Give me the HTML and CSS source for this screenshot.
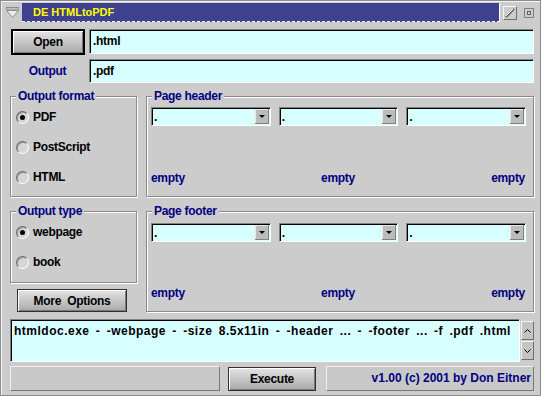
FILE: index.html
```html
<!DOCTYPE html>
<html>

<head>
  <meta charset="utf-8">
  <title>DE HTMLtoPDF</title>
  <link rel="stylesheet" href="styles.css">
</head>

<body>
  <div class="window">
    <div class="titlebar">
      <div class="sysmenu">
        <svg width="13" height="11" viewBox="0 0 13 11">
          <rect x="0.5" y="0.5" width="12" height="1.5" fill="#f4f4f4" stroke="#8a8a8a" stroke-width="1" />
          <polygon points="0.5,3.5 12.5,3.5 6.5,10.5" fill="#ececec" stroke="#8a8a8a" stroke-width="1" />
        </svg>
      </div>
      <div class="title">DE HTMLtoPDF</div>
      <div class="winbtns">
        <span class="winbtn hide">
          <svg width="10" height="10" viewBox="0 0 10 10">
            <line x1="1" y1="9" x2="9" y2="1" stroke="#606060" stroke-width="2" />
            <line x1="1" y1="8" x2="8" y2="1" stroke="#ffffff" stroke-width="1" />
          </svg>
        </span>
        <span class="winbtn restore">
          <svg width="10" height="10" viewBox="0 0 10 10">
            <rect x="0.5" y="0.5" width="9" height="9" fill="none" stroke="#808080" />
            <rect x="3.5" y="3.5" width="3" height="3" fill="none" stroke="#606060" />
          </svg>
        </span>
      </div>
    </div>

    <div class="client">
      <div class="row row-open">
        <button class="btn btn-default open">Open</button>
        <div class="entry">.html</div>
      </div>
      <div class="row row-output">
        <span class="field-label">Output</span>
        <div class="entry">.pdf</div>
      </div>

      <div class="panes">
        <fieldset class="group format">
          <legend>Output format</legend>
          <div class="radios">
            <div class="radio-row"><span class="radio checked"></span>PDF</div>
            <div class="radio-row"><span class="radio"></span>PostScript</div>
            <div class="radio-row"><span class="radio"></span>HTML</div>
          </div>
        </fieldset>

        <fieldset class="group slots header">
          <legend>Page header</legend>
          <div class="combos">
            <div class="combo"><span class="combo-text">.</span><span class="combo-btn"></span></div>
            <div class="combo"><span class="combo-text">.</span><span class="combo-btn"></span></div>
            <div class="combo"><span class="combo-text">.</span><span class="combo-btn"></span></div>
          </div>
          <div class="slot-values">
            <span>empty</span>
            <span>empty</span>
            <span>empty</span>
          </div>
        </fieldset>

        <div class="left-stack">
          <fieldset class="group type">
            <legend>Output type</legend>
            <div class="radios">
              <div class="radio-row"><span class="radio checked"></span>webpage</div>
              <div class="radio-row"><span class="radio"></span>book</div>
            </div>
          </fieldset>
          <button class="btn more">More&nbsp; Options</button>
        </div>

        <fieldset class="group slots footer">
          <legend>Page footer</legend>
          <div class="combos">
            <div class="combo"><span class="combo-text">.</span><span class="combo-btn"></span></div>
            <div class="combo"><span class="combo-text">.</span><span class="combo-btn"></span></div>
            <div class="combo"><span class="combo-text">.</span><span class="combo-btn"></span></div>
          </div>
          <div class="slot-values">
            <span>empty</span>
            <span>empty</span>
            <span>empty</span>
          </div>
        </fieldset>
      </div>

      <div class="command">
        <div class="command-text">htmldoc.exe - -webpage - -size 8.5x11in - -header ... - -footer ... -f .pdf .html</div>
        <div class="scroller">
          <span class="scroll-btn up">
            <svg width="7" height="4" viewBox="0 0 7 4"><polyline points="0.5,3.5 3.5,0.5 6.5,3.5" fill="none" stroke="#000" stroke-width="1" /></svg>
          </span>
          <span class="scroll-btn down">
            <svg width="7" height="4" viewBox="0 0 7 4"><polyline points="0.5,0.5 3.5,3.5 6.5,0.5" fill="none" stroke="#000" stroke-width="1" /></svg>
          </span>
        </div>
      </div>

      <div class="statusbar">
        <div class="panel"></div>
        <button class="btn execute">Execute</button>
        <div class="panel version">v1.00 (c) 2001 by Don Eitner</div>
      </div>
    </div>
  </div>
</body>

</html>
```

FILE: styles.css
```css
body {
  margin: 0;
  background: #cccccc;
  font-family: "Liberation Sans", Arial, sans-serif;
  font-weight: bold;
  font-size: 12px;
  letter-spacing: -0.3px;
  color: #000;
}

.window {
  box-sizing: border-box;
  width: 541px;
  height: 396px;
  border: 1px solid #8c8c8c;
  box-shadow: inset 1px 1px 0 #f4f4f4;
  padding: 2px 3px 3px 2px;
  display: flex;
  flex-direction: column;
}

/* title bar */
.titlebar {
  display: flex;
  height: 19px;
}

.sysmenu {
  width: 19px;
  display: flex;
  align-items: center;
  justify-content: center;
}

.title {
  flex: 1;
  background: #404090;
  color: #ffff00;
  font-size: 11px;
  letter-spacing: 0;
  line-height: 18px;
  padding-left: 11px;
  border-bottom: 1px dashed #ffffff;
  border-right: 1px solid #ffffff;
}

.winbtns {
  width: 37px;
  display: flex;
  align-items: center;
  justify-content: space-between;
  padding: 0 3px 0 3px;
  box-sizing: border-box;
}

.winbtn {
  display: flex;
  align-items: center;
  justify-content: center;
}

.winbtn.hide {
  width: 12px;
  height: 12px;
  border: 1px solid;
  border-color: #f4f4f4 #707070 #707070 #f4f4f4;
}

/* client area */
.client {
  flex: 1;
  display: flex;
  flex-direction: column;
  padding: 7px 3px 0 7px;
}

.row {
  display: flex;
  align-items: center;
}

.row-open {
  height: 26px;
}

.row-output {
  height: 24px;
  margin-top: 4px;
}

.btn {
  font: inherit;
  letter-spacing: inherit;
  color: #000;
  padding: 0;
  border: 1px solid #303030;
  background: linear-gradient(#e4e4e4, #a9a9a9);
  box-shadow: inset 1px 1px 0 #ffffff, inset -1px -1px 0 #7a7a7a;
}

.btn-default {
  border: 2px solid #000;
}

.open {
  width: 74px;
  height: 26px;
  margin-left: 1px;
}

.field-label {
  width: 75px;
  text-align: center;
  color: #000080;
}

.entry {
  flex: 1;
  height: 24px;
  box-sizing: border-box;
  margin-left: 4px;
  background: #d8ffff;
  border: 1px solid;
  border-color: #808080 #ffffff #ffffff #808080;
  box-shadow: inset 1px 1px 0 #000;
  padding: 3px 0 0 3px;
  line-height: 17px;
}

.row-open .entry {
  height: 25px;
  align-self: flex-start;
}

/* group boxes */
.panes {
  margin-top: 7px;
  display: grid;
  grid-template-columns: 127px 1fr;
  grid-template-rows: 107px 107px;
  column-gap: 9px;
  row-gap: 8px;
}

.group {
  margin: 0;
  min-width: 0;
  padding: 0 7px 11px 4px;
  border: 1px solid #8a8a8a;
  box-shadow: inset 1px 1px 0 #ffffff, 1px 1px 0 #ffffff;
  box-sizing: border-box;
}

.group legend {
  color: #000080;
  padding: 0 2px;
  margin-left: 1px;
  line-height: 13px;
  background: #cccccc;
}

.radios {
  margin-top: -1px;
}

.radio-row {
  height: 30px;
  display: flex;
  align-items: center;
}

.radio {
  width: 13px;
  height: 13px;
  box-sizing: border-box;
  border-radius: 50%;
  border: 1px solid;
  border-color: #6a6a6a #ffffff #ffffff #6a6a6a;
  background: #d6d6d6;
  box-shadow: inset 1px 1px 0 #9a9a9a;
  margin: 0 4px 0 1px;
  display: flex;
  align-items: center;
  justify-content: center;
}

.radio.checked::after {
  content: "";
  width: 5px;
  height: 5px;
  border-radius: 50%;
  background: #000;
}

.type {
  height: 78px;
}

.left-stack {
  display: flex;
  flex-direction: column;
}

.more {
  width: 110px;
  height: 24px;
  margin: 6px 0 0 7px;
}

.slots {
  display: flex;
  flex-direction: column;
  justify-content: space-between;
}

.combos {
  margin-top: 4px;
  display: grid;
  grid-template-columns: 1fr 1fr 1fr;
  column-gap: 8px;
}

.footer .combos {
  margin-top: 5px;
}

.combo {
  height: 19px;
  box-sizing: border-box;
  display: flex;
  background: #d8ffff;
  border: 1px solid;
  border-color: #808080 #ffffff #ffffff #808080;
  box-shadow: inset 1px 1px 0 #000;
}

.combo-text {
  flex: 1;
  padding-left: 2px;
  line-height: 19px;
}

.combo-btn {
  width: 14px;
  margin: 1px 1px 1px 0;
  background: #bcbcbc;
  border-left: 1px solid #f0f0f0;
  box-shadow: inset -1px -1px 0 #808080, inset 1px 1px 0 #e8e8e8;
  display: flex;
  align-items: center;
  justify-content: center;
}

.combo-btn::after {
  content: "";
  border-left: 3px solid transparent;
  border-right: 3px solid transparent;
  border-top: 3px solid #000;
}

.slot-values {
  display: flex;
  justify-content: space-between;
  color: #000080;
  line-height: 13px;
  padding-right: 1px;
}

/* command line */
.command {
  margin-top: 7px;
  height: 43px;
  display: flex;
}

.command-text {
  flex: 1;
  box-sizing: border-box;
  background: #d8ffff;
  border: 1px solid;
  border-color: #808080 #ffffff #ffffff #808080;
  box-shadow: inset 1px 1px 0 #000;
  padding: 3px 0 0 3px;
  line-height: 16px;
  white-space: nowrap;
  overflow: hidden;
  letter-spacing: 0.5px;
  word-spacing: 2.5px;
}

.scroller {
  width: 13px;
  margin-left: 1px;
  padding: 2px 0;
  display: flex;
  flex-direction: column;
  justify-content: space-between;
}

.scroll-btn {
  height: 19px;
  box-sizing: border-box;
  border: 1px solid;
  border-color: #f4f4f4 #707070 #707070 #f4f4f4;
  background: #c4c4c4;
  display: flex;
  align-items: center;
  justify-content: center;
}

/* bottom row */
.statusbar {
  margin-top: 4px;
  height: 25px;
  display: grid;
  grid-template-columns: 210px 88px 1fr;
  column-gap: 8px;
}

.panel {
  box-sizing: border-box;
  border: 1px solid;
  border-color: #f0f0f0 #7a7a7a #7a7a7a #f0f0f0;
  background: #c8c8c8;
}

.version {
  margin-left: 2px;
  color: #000080;
  text-align: right;
  line-height: 23px;
  padding-right: 2px;
  letter-spacing: 0;
}

.execute {
  height: 24px;
  margin-top: 1px;
}
```
